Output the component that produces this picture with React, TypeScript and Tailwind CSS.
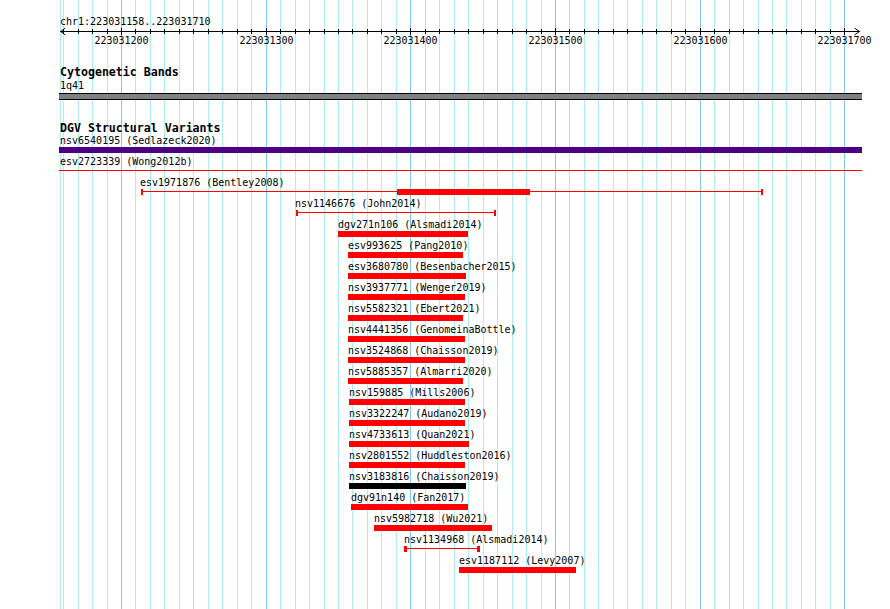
import React from "react";

const MONO = { fontFamily: '"DejaVu Sans Mono", "Liberation Mono", monospace' };

const gx = (k: number) => Math.round(121 + k * 14.466);
const KS = Array.from({ length: 55 }, (_, i) => i - 4);
const MAJOR = [0, 10, 20, 30, 40, 50];
const LABELS = ["223031200", "223031300", "223031400", "223031500", "223031600", "223031700"];

type Row = {
  label: string;
  tx: number;
  x1: number;
  x2: number;
  kind: "red" | "purple" | "black" | "line" | "capped";
  thick?: [number, number];
  cap?: number;
};

const ROWS: Row[] = [
  { label: "nsv6540195 (Sedlazeck2020)", tx: 60, x1: 59, x2: 862, kind: "purple" },
  { label: "esv2723339 (Wong2012b)", tx: 60, x1: 59, x2: 862, kind: "line" },
  { label: "esv1971876 (Bentley2008)", tx: 140, x1: 141, x2: 763, kind: "capped", thick: [397, 530], cap: 2 },
  { label: "nsv1146676 (John2014)", tx: 295, x1: 296, x2: 496, kind: "capped", cap: 2 },
  { label: "dgv271n106 (Alsmadi2014)", tx: 338, x1: 338, x2: 468, kind: "red" },
  { label: "esv993625 (Pang2010)", tx: 348, x1: 348, x2: 463, kind: "red" },
  { label: "esv3680780 (Besenbacher2015)", tx: 348, x1: 348, x2: 466, kind: "red" },
  { label: "nsv3937771 (Wenger2019)", tx: 348, x1: 348, x2: 465, kind: "red" },
  { label: "nsv5582321 (Ebert2021)", tx: 348, x1: 348, x2: 463, kind: "red" },
  { label: "nsv4441356 (GenomeinaBottle)", tx: 348, x1: 348, x2: 465, kind: "red" },
  { label: "nsv3524868 (Chaisson2019)", tx: 348, x1: 348, x2: 465, kind: "red" },
  { label: "nsv5885357 (Almarri2020)", tx: 348, x1: 348, x2: 463, kind: "red" },
  { label: "nsv159885 (Mills2006)", tx: 349, x1: 349, x2: 465, kind: "red" },
  { label: "nsv3322247 (Audano2019)", tx: 349, x1: 349, x2: 465, kind: "red" },
  { label: "nsv4733613 (Quan2021)", tx: 349, x1: 349, x2: 469, kind: "red" },
  { label: "nsv2801552 (Huddleston2016)", tx: 349, x1: 349, x2: 465, kind: "red" },
  { label: "nsv3183816 (Chaisson2019)", tx: 349, x1: 349, x2: 466, kind: "black" },
  { label: "dgv91n140 (Fan2017)", tx: 351, x1: 351, x2: 468, kind: "red" },
  { label: "nsv5982718 (Wu2021)", tx: 374, x1: 374, x2: 492, kind: "red" },
  { label: "nsv1134968 (Alsmadi2014)", tx: 404, x1: 404, x2: 480, kind: "capped", cap: 3 },
  { label: "esv1187112 (Levy2007)", tx: 459, x1: 459, x2: 576, kind: "red" },
];

function Grid() {
  return (
    <svg className="absolute left-0 top-0" width={890} height={609} shapeRendering="crispEdges">
      <line x1={60.5} y1={0} x2={60.5} y2={609} stroke="#afeeee" strokeWidth={1} />
      {KS.map((k) => (
        <line
          key={k}
          x1={gx(k) + 0.5}
          y1={0}
          x2={gx(k) + 0.5}
          y2={609}
          stroke={k % 10 === 0 ? "#87c6f0" : "#afeeee"}
          strokeWidth={1}
        />
      ))}
    </svg>
  );
}

function Ruler() {
  // svg top at page y=28
  return (
    <svg width={890} height={20} className="block" shapeRendering="crispEdges">
      <line x1={60} y1={3.5} x2={860} y2={3.5} stroke="#000" strokeWidth={1} />
      <polyline points="65.5,0 60.5,3.5 65.5,7" fill="none" stroke="#000" strokeWidth={1} shapeRendering="auto" />
      <polyline points="854.5,0 859.5,3.5 854.5,7" fill="none" stroke="#000" strokeWidth={1} shapeRendering="auto" />
      {KS.map((k) => {
        const major = k % 10 === 0;
        return (
          <line
            key={k}
            x1={gx(k) + 0.5}
            y1={major ? 0 : 1}
            x2={gx(k) + 0.5}
            y2={major ? 7 : 6}
            stroke="#000"
            strokeWidth={1}
          />
        );
      })}
      {MAJOR.map((k, i) => (
        <text
          key={k}
          x={gx(k) + 0.5}
          y={15.5}
          textAnchor="middle"
          fontSize={10}
          fill="#000"
          style={MONO}
        >
          {LABELS[i]}
        </text>
      ))}
    </svg>
  );
}

function Feature({ r }: { r: Row }) {
  const w = r.x2 - r.x1;
  return (
    <div className="flex h-[21px] flex-col">
      <div className="h-[10px] whitespace-nowrap text-[10px] leading-[10px] text-black" style={{ marginLeft: r.tx }}>
        {r.label}
      </div>
      <div className="relative mt-[1px] h-[6px]" style={{ marginLeft: r.x1, width: w }}>
        {r.kind === "red" && <div className="h-full w-full bg-[#ff0000]" />}
        {r.kind === "purple" && <div className="h-full w-full bg-[#4b0082]" />}
        {r.kind === "black" && <div className="h-full w-full bg-black" />}
        {r.kind === "line" && <div className="absolute left-0 right-0 top-[2px] h-px bg-[#ff0000]" />}
        {r.kind === "capped" && (
          <>
            <div className="absolute left-0 right-0 top-[2px] h-px bg-[#ff0000]" />
            <div className="absolute left-0 top-0 h-full bg-[#ff0000]" style={{ width: r.cap }} />
            <div className="absolute right-0 top-0 h-full bg-[#ff0000]" style={{ width: r.cap }} />
            {r.thick && (
              <div
                className="absolute top-0 h-full bg-[#ff0000]"
                style={{ left: r.thick[0] - r.x1, width: r.thick[1] - r.thick[0] }}
              />
            )}
          </>
        )}
      </div>
    </div>
  );
}

export default function App() {
  return (
    <div className="relative h-[609px] w-[890px] overflow-hidden bg-white text-black" style={MONO}>
      <Grid />
      <div className="relative flex flex-col">
        <div className="ml-[60px] mt-[15px] h-[13px] text-[10px] leading-[13px]">chr1:223031158..223031710</div>
        <Ruler />
        <div className="ml-[60px] mt-[18px] h-[13px] text-[11.6px] font-bold leading-[13px]">Cytogenetic Bands</div>
        <div className="ml-[60px] h-[13px] text-[10px] leading-[13px]">1q41</div>
        <div className="ml-[59px] mt-[1px] h-[7px] w-[803px] border-y border-black bg-[#808080]" />
        <div className="ml-[60px] mt-[22px] h-[13px] text-[11.6px] font-bold leading-[13px]">DGV Structural Variants</div>
        <div className="mt-[1px] flex flex-col">
          {ROWS.map((r) => (
            <Feature key={r.label} r={r} />
          ))}
        </div>
      </div>
    </div>
  );
}
